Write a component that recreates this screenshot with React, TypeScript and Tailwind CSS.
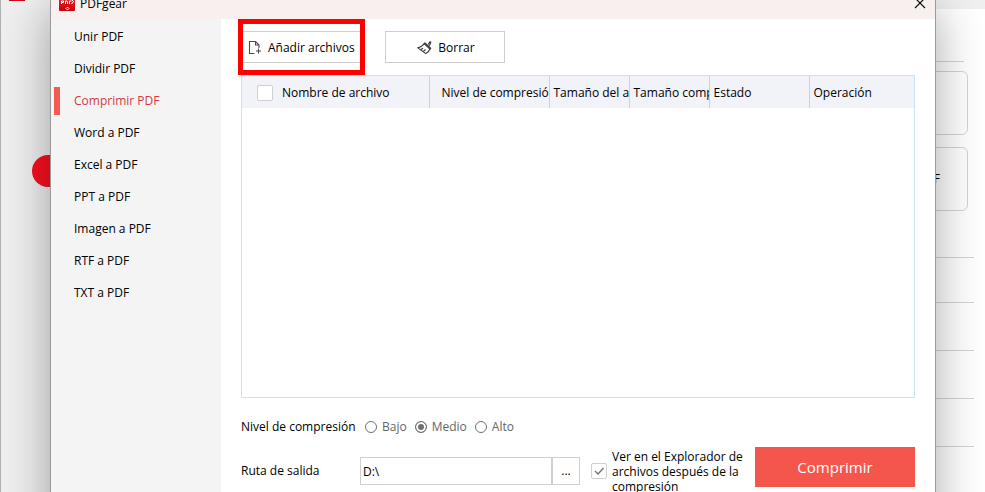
import { useState } from "react";

const tools = [
  "Unir PDF",
  "Dividir PDF",
  "Comprimir PDF",
  "Word a PDF",
  "Excel a PDF",
  "PPT a PDF",
  "Imagen a PDF",
  "RTF a PDF",
  "TXT a PDF",
];

const levels = ["Bajo", "Medio", "Alto"];

function Logo({ className }: { className: string }) {
  return (
    <svg viewBox="0 0 16 16" className={className} aria-hidden="true">
      <defs>
        <linearGradient id="logo-red" x1="0" y1="0" x2="0" y2="1">
          <stop offset="0" stopColor="#f52a32" />
          <stop offset="1" stopColor="#c8000a" />
        </linearGradient>
      </defs>
      <rect width="16" height="16" rx="1" fill="url(#logo-red)" />
      <path d="M2.5 9V6h2v1.5h-2M6.500 9V6H8l.5 1v2M10.500 9V6h2M13 5l1.500 1.500L12.500 9" fill="none" stroke="#fff" strokeWidth="1" />
      <path d="M8.500 12l1.500 1.500L8.500 15 7 13.500z" fill="none" stroke="#fff" strokeWidth="0.900" />
    </svg>
  );
}

function AddFileIcon() {
  return (
    <svg width="14" height="14" viewBox="0 0 14 14" fill="none" stroke="#4a4a4a" strokeWidth="1.1" aria-hidden="true">
      <path d="M6.500 12.500h-5v-12h6l3.500 3.500v3" />
      <path d="M7.500 .5V4H11" />
      <path d="M10.500 7.500v5M8 10h5" />
    </svg>
  );
}

function BrushIcon() {
  return (
    <svg width="15" height="15" viewBox="0 0 15 15" fill="none" stroke="#333" strokeWidth="1.100" strokeLinejoin="round" aria-hidden="true">
      <path d="M11.300 4.600l1.500-2.900 1 .6-1.400 3.500" />
      <path d="M8 2.800l5.700 5.300-.6 1-6.100-5.400z" />
      <path d="M7.200 3.900C5.500 5.900 3.200 7.300.8 7.900l8 5.700c1.900-.7 3.300-2.400 4.100-4.600" />
      <path d="M3.600 9.800L6 8.200M6.200 11.700L8.500 9.500" />
    </svg>
  );
}

function Backdrop() {
  return (
    <div className="flex min-h-screen flex-col border-l border-[#b0b0b0] bg-white">
      <div className="h-[9px] shrink-0 bg-[#f0f0f0]">
        <div className="ml-2 h-px w-4 bg-[#d00010]" />
      </div>
      <div className="flex flex-1">
        <div className="w-[200px] bg-[#efefef] pt-[146px] pl-[31px]">
          <div className="h-8 w-[120px] rounded-full bg-[#fa0f1e]" />
        </div>
        <div className="flex flex-1 flex-col items-end pt-[52px]">
          <div className="mr-[21px] w-full max-w-[200px] border-t border-[#d4d4d4]" />
          <div className="mt-[9px] mr-[17px] h-16 w-[200px] rounded-md border border-[#d4d4d4]" />
          <div className="mt-3 mr-[17px] flex h-16 w-[200px] items-center justify-end rounded-md border border-[#d4d4d4] pr-[27px] text-xs text-black">
            PDF
          </div>
          <div className="mt-[46px] mr-[11px] h-[45px] w-[200px] border-t border-[#d4d4d4]" />
          {[0, 1, 2, 3].map((row) => (
            <div key={row} className="mr-[11px] h-12 w-[200px] border-t border-[#d4d4d4]" />
          ))}
        </div>
      </div>
    </div>
  );
}

export default function App() {
  const [active, setActive] = useState("Comprimir PDF");
  const [level, setLevel] = useState("Medio");
  const [path, setPath] = useState("D:\\");

  return (
    <div className="relative h-screen overflow-hidden font-['Open_Sans',sans-serif] text-xs text-black">
      <Backdrop />

      {/* Converter window */}
      <div className="absolute top-0 right-[49px] -bottom-16 left-[50px] flex flex-col border-x border-[#9a9a9a] bg-white shadow-[0_8px_44px_rgba(0,0,0,0.34)]">
        <header className="flex h-[19px] shrink-0 items-end justify-between bg-[#f8f0ef] pr-[9px] pl-2">
          <div className="mb-2 flex items-end gap-[5px]">
            <Logo className="h-4 w-4" />
            <span className="leading-[14px]">PDFgear</span>
          </div>
          <button aria-label="Cerrar" className="mb-[10px]">
            <svg width="12" height="12" viewBox="0 0 12 12" stroke="#111" strokeWidth="1.200" aria-hidden="true">
              <path d="M1 1l10 10M11 1L1 11" />
            </svg>
          </button>
        </header>

        <div className="flex min-h-0 flex-1">
          <nav className="flex w-[170px] shrink-0 flex-col bg-[#f4f4f4] pt-[2px] pl-[3px]">
            {tools.map((tool) => (
              <button
                key={tool}
                onClick={() => setActive(tool)}
                className={`flex h-8 items-center gap-[14px] text-left ${tool === active ? "text-[#d13b40]" : ""}`}
              >
                <span className={`h-7 w-[6px] ${tool === active ? "bg-[#f55a50]" : ""}`} />
                {tool}
              </button>
            ))}
          </nav>

          <main className="flex min-w-0 flex-1 flex-col px-5">
            <div className="flex shrink-0 items-center gap-5">
              <div className="-ml-[3px] border-[5px] border-[#fe0000] py-[7px]">
                <button className="flex h-8 w-[117px] items-center gap-[6px] border-y border-[#cfcfcf] pt-px pl-[5px] whitespace-nowrap">
                  <AddFileIcon />
                  Añadir archivos
                </button>
              </div>
              <button className="flex h-8 w-[120px] items-center justify-center gap-[6px] border border-[#cfcfcf] pt-px pl-[2px]">
                <BrushIcon />
                Borrar
              </button>
            </div>

            <div className="h-[323px] shrink-0 border border-[#c8e4fa]">
              <table className="w-full table-fixed text-left">
                <thead className="bg-[#f2f3f8]">
                  <tr className="h-8 [&>th]:overflow-hidden [&>th]:border-r [&>th]:border-[#cfd0d4] [&>th]:p-0 [&>th]:pt-px [&>th]:pl-1 [&>th]:font-normal [&>th]:whitespace-nowrap [&>th:last-child]:border-r-0">
                    <th className="w-[187px]">
                      <label className="flex items-center gap-[9px] pl-[11px]">
                        <input type="checkbox" className="h-4 w-4 appearance-none rounded-xs border border-[#d0d0d4] bg-white" />
                        Nombre de archivo
                      </label>
                    </th>
                    <th className="w-[120px]">
                      <span className="pl-2">Nivel de compresión</span>
                    </th>
                    <th className="w-20">Tamaño del ar</th>
                    <th className="w-20">Tamaño comp</th>
                    <th className="w-[100px]">Estado</th>
                    <th>Operación</th>
                  </tr>
                </thead>
              </table>
            </div>

            <fieldset className="mt-[21px] flex h-[18px] shrink-0 items-center">
              <legend className="float-left w-[124px]">Nivel de compresión</legend>
              <div className="flex gap-2 text-[#666]">
                {levels.map((name) => (
                  <label key={name} className="flex items-center gap-[5px]">
                    <input
                      type="radio"
                      name="level"
                      checked={level === name}
                      onChange={() => setLevel(name)}
                      className="h-3 w-3 appearance-none rounded-full border border-[#707070] bg-white checked:bg-[#707070] checked:shadow-[inset_0_0_0_2px_#fff]"
                    />
                    {name}
                  </label>
                ))}
              </div>
            </fieldset>

            <div className="mt-[10px] flex shrink-0 items-center">
              <label htmlFor="output" className="w-[119px]">
                Ruta de salida
              </label>
              <input
                id="output"
                value={path}
                onChange={(e) => setPath(e.target.value)}
                className="h-7 w-[192px] border border-[#cfcfcf] bg-white pl-[2px]"
              />
              <button aria-label="Examinar" className="h-7 w-7 border border-[#cfcfcf]">
                ...
              </button>
              <label className="ml-[11px] flex w-[160px] items-center gap-[5px]">
                <span className="relative flex h-4 w-4 shrink-0">
                  <input type="checkbox" defaultChecked className="peer h-4 w-4 appearance-none rounded-xs border border-[#cfcfd4] bg-white" />
                  <svg viewBox="0 0 16 16" className="pointer-events-none absolute inset-0 hidden peer-checked:block" fill="none" stroke="#707070" strokeWidth="1.300" aria-hidden="true">
                    <path d="M4 8l3 3 5.500-6" />
                  </svg>
                </span>
                <span className="leading-[15px]">Ver en el Explorador de archivos después de la compresión</span>
              </label>
              <button className="mb-2 ml-auto h-10 w-[160px] bg-[#f5564c] text-[15px] text-white">Comprimir</button>
            </div>
          </main>
        </div>
      </div>
    </div>
  );
}
